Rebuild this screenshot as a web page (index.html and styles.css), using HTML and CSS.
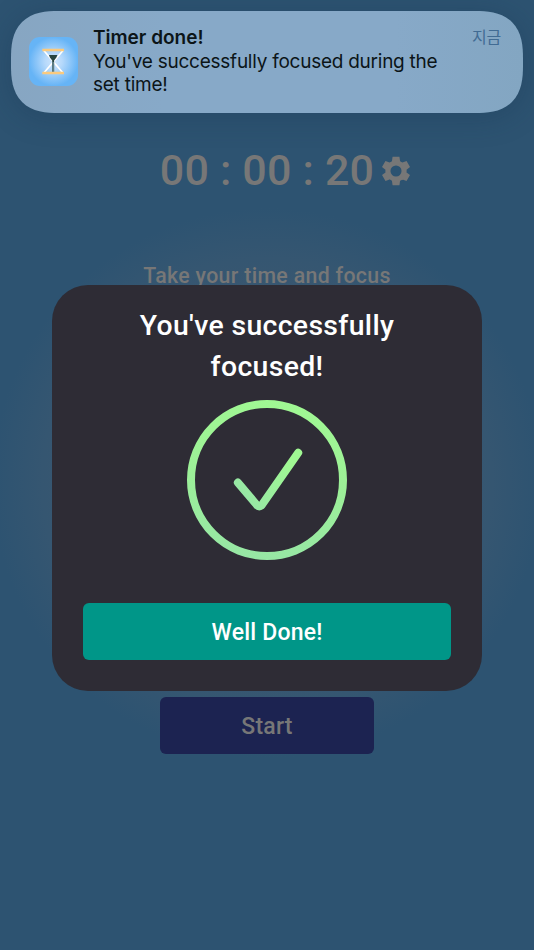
FILE: index.html
```html
<!DOCTYPE html>
<html lang="en">
<head>
  <meta charset="UTF-8">
  <meta name="viewport" content="width=device-width, initial-scale=1.0">
  <title>Focus Timer</title>
  <link rel="stylesheet" href="styles.css">
</head>
<body>

  <main class="timer-page">
    <div class="timer-row">
      <span class="time">00 : 00 : 20</span>
      <svg class="settings-icon" viewBox="0 0 24 24">
        <path fill-rule="evenodd" d="M19.44 12.99l-.01.02c.04-.33.08-.67.08-1.01 0-.34-.03-.66-.07-.99l.01.02 2.44-1.92-2.43-4.22-2.87 1.16.01.01c-.52-.4-1.09-.74-1.71-1h.01L14.44 2H9.57l-.44 3.07h.01c-.62.26-1.19.6-1.71 1l.01-.01-2.88-1.17-2.44 4.22 2.44 1.92.01-.02c-.04.33-.07.65-.07.99 0 .34.03.68.08 1.01l-.01-.02-2.43 1.91 2.43 4.2 2.88-1.15-.02-.04c.53.41 1.1.75 1.73 1.01h-.03L9.58 22h4.85l.44-3.07h-.01c.62-.26 1.2-.6 1.73-1.01l-.02.04 2.88 1.15 2.43-4.2-2.44-1.92zM12 15.9a3.9 3.9 0 1 1 0-7.8 3.9 3.9 0 0 1 0 7.8z"/>
      </svg>
    </div>
    <p class="tagline">Take your time and focus</p>
    <button class="start-button">Start</button>
  </main>

  <!-- Success dialog -->
  <div class="dialog">
    <h1 class="dialog-title">You've successfully focused!</h1>
    <svg class="check-icon" viewBox="0 0 160 160">
      <defs>
        <linearGradient id="ringGreen" gradientUnits="userSpaceOnUse" x1="90" y1="0" x2="70" y2="160">
          <stop offset="0" stop-color="#a0f893"/>
          <stop offset="0.45" stop-color="#9df197"/>
          <stop offset="1" stop-color="#97e7a5"/>
        </linearGradient>
        <linearGradient id="checkGreen" gradientUnits="userSpaceOnUse" x1="100" y1="60" x2="55" y2="95">
          <stop offset="0" stop-color="#a0f893"/>
          <stop offset="1" stop-color="#97e7a5"/>
        </linearGradient>
      </defs>
      <circle cx="80" cy="80" r="76" stroke="url(#ringGreen)"/>
      <path d="M50.9 82.6L69.8 105Q72.3 107.8 74.8 105L111.2 52.8" stroke="url(#checkGreen)"/>
    </svg>
    <button class="done-button">Well Done!</button>
  </div>

  <!-- Push notification -->
  <div class="notification">
    <svg class="app-icon" viewBox="0 0 49 49">
      <defs>
        <radialGradient id="iconGlow">
          <stop offset="0" stop-color="#cfe5fc"/>
          <stop offset="0.35" stop-color="#b6d9fb"/>
          <stop offset="1" stop-color="#66b4f6"/>
        </radialGradient>
      </defs>
      <rect width="49" height="49" rx="11" fill="url(#iconGlow)"/>
      <path d="M14.8 13.5L34 36M34 13.5L14.8 36" stroke="#fff" stroke-width="1.7"/>
      <path d="M20 18h8.400l-1 2.500-2.300 3v11.500h-1.900V23.500l-2.300-3z" fill="#284540"/>
      <path d="M23.200 25h1.900v10h-1.900z" fill="#5f7f87"/>
      <path d="M13.300 11.700h21.700v2.500H13.300zM13.300 34.700h21.700v2.500H13.300z" fill="#fbca7e"/>
    </svg>
    <div class="notification-body">
      <div class="notification-head">
        <strong class="notification-title">Timer done!</strong>
        <span class="notification-time" lang="ko">지금</span>
      </div>
      <p class="notification-text">You've successfully focused during the set time!</p>
    </div>
  </div>

</body>
</html>
```

FILE: styles.css
```css
* {
  box-sizing: border-box;
}
body {
  margin: 0;
  font-family: Roboto, sans-serif;
  font-weight: 500;
  color: #777;
  background: #2d5270;
}
button {
  border: none;
  border-radius: 6px;
  padding: 1px 0 0;
  height: 57px;
  font: inherit;
  font-size: 23px;
  letter-spacing: 0.2px;
}
.timer-page {
  display: flex;
  flex-direction: column;
  align-items: center;
  height: 950px;
  padding-top: 145px;
  background: radial-gradient(circle at 267px 483px, #3f5a71 0, #3a5770 170px, #355671 225px, #2d5371 275px);
}
.timer-row {
  display: grid;
  grid-template-columns: 1fr auto 1fr;
  align-items: center;
  width: 100%;
  height: 52px;
}
.time {
  grid-column: 2;
  padding-bottom: 2px;
  font-size: 43px;
  line-height: 50px;
  letter-spacing: 0.2px;
  white-space: nowrap;
}
.settings-icon {
  width: 34px;
  height: 34px;
  margin-left: 5px;
  fill: #777;
}
.tagline {
  margin: 63px 0 0;
  font-size: 21.3px;
  line-height: 32px;
  letter-spacing: 0.33px;
}
.start-button {
  width: 214px;
  margin-top: 405px;
  color: #777;
  background: #1c2351;
}

.dialog {
  position: absolute;
  top: 285px;
  left: 52px;
  display: flex;
  flex-direction: column;
  align-items: center;
  width: 430px;
  height: 406px;
  padding: 20px 31px 31px;
  border-radius: 36px;
  color: #fff;
  background: #2e2c35;
}
.dialog-title {
  margin: 0;
  width: 300px;
  font-size: 28.4px;
  font-weight: 500;
  line-height: 41px;
  letter-spacing: 0.35px;
  text-align: center;
}
.check-icon {
  width: 160px;
  height: 160px;
  margin-top: 13px;
  fill: none;
  stroke-width: 8;
  stroke-linecap: round;
}
.done-button {
  width: 100%;
  margin-top: auto;
  color: #fff;
  background: #009688;
}

.notification {
  position: absolute;
  top: 11px;
  left: 11px;
  display: flex;
  width: 512px;
  height: 102px;
  padding: 15px 22px 0 18px;
  border-radius: 37px;
  font-family: Inter, "Noto Sans CJK KR", sans-serif;
  font-size: 19px;
  font-weight: 400;
  line-height: 23.4px;
  letter-spacing: -0.25px;
  color: #0c1518;
  background: linear-gradient(90deg, #87a6c2, #87a9c8 30%, #87a9c8 75%, #83a6c2);
  box-shadow: 0 4px 30px rgba(20, 50, 80, 0.3);
}
.app-icon {
  width: 49px;
  height: 49px;
  margin: 11px 15px 0 0;
}
.notification-body {
  flex: 1;
  padding-top: 0.4px;
}
.notification-head {
  display: flex;
  justify-content: space-between;
}
.notification-title {
  font-weight: 600;
  letter-spacing: 0;
}
.notification-time {
  font-size: 16px;
  color: #416b93;
}
.notification-text {
  margin: 0;
  width: 360px;
}

@supports (corner-shape: squircle) {
  .notification {
    border-radius: 48px;
    corner-shape: superellipse(1.4);
  }
}
```
